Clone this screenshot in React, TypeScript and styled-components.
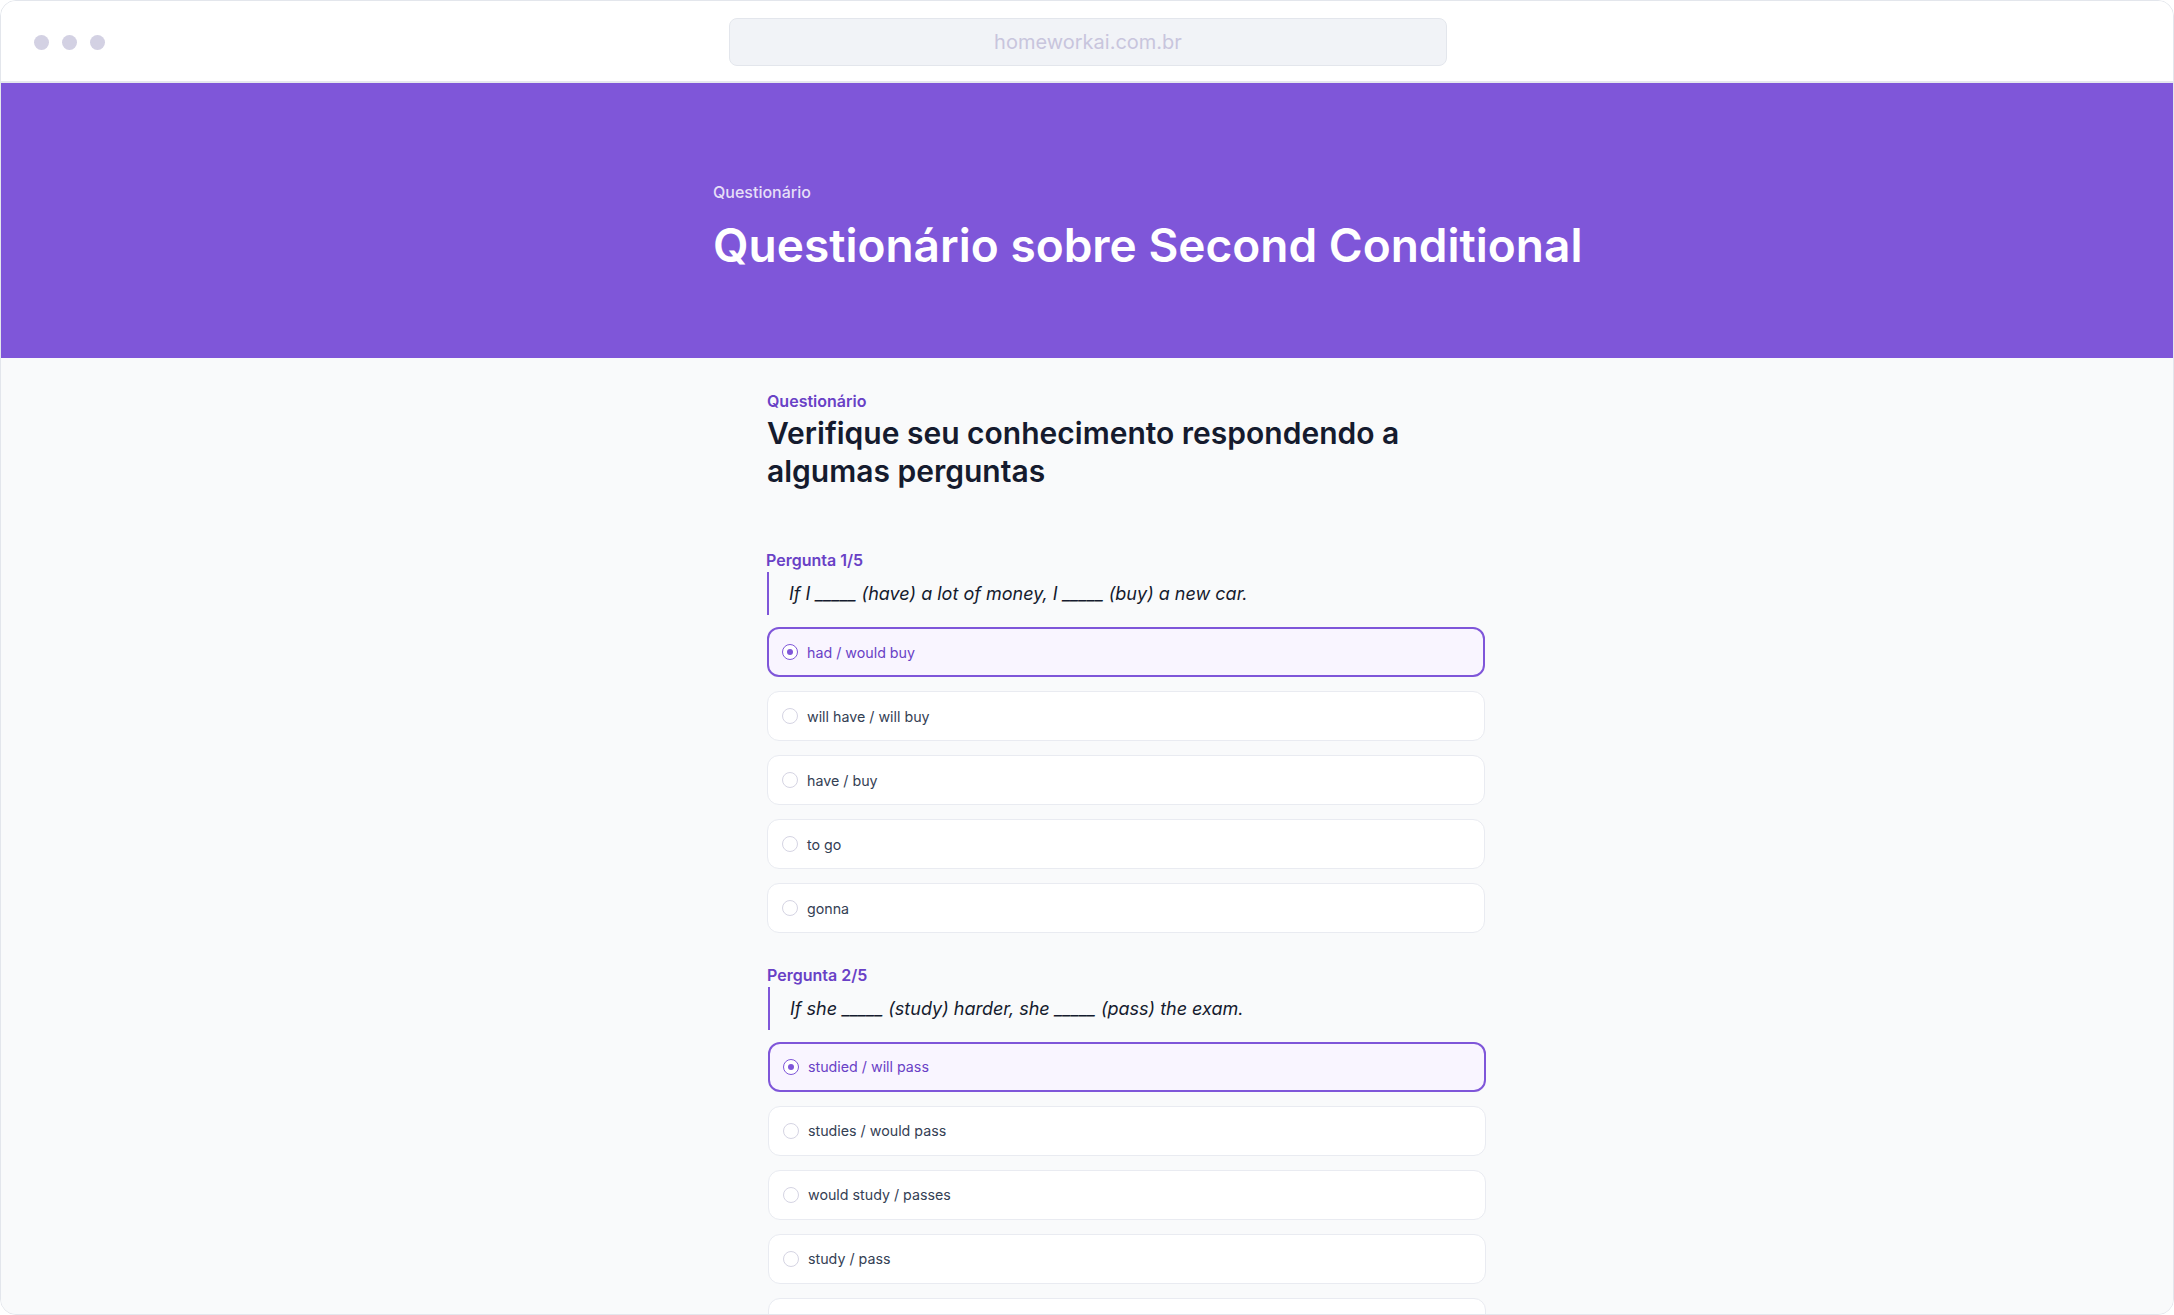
import React from "react";
import styled, { createGlobalStyle } from "styled-components";

const GlobalStyle = createGlobalStyle`
  html, body {
    margin: 0;
    padding: 0;
    background: #ffffff;
  }
  body {
    font-family: Inter, "Noto Sans", "Liberation Sans", sans-serif;
    -webkit-font-smoothing: antialiased;
  }
  * { box-sizing: border-box; }
`;

const Window = styled.div`
  height: 1315px;
  border: 1px solid #e3e6ec;
  border-radius: 16px;
  overflow: hidden;
  display: flex;
  flex-direction: column;
  background: #f9fafb;
`;

const Chrome = styled.header`
  height: 82px;
  flex: none;
  background: #ffffff;
  border-bottom: 2px solid #e6e8ee;
  display: grid;
  grid-template-columns: 1fr 720px 1fr;
  align-items: center;
`;

const Dots = styled.div`
  display: flex;
  gap: 13px;
  padding-left: 33px;
  margin-top: 2px;
`;

const Dot = styled.span`
  width: 15px;
  height: 15px;
  border-radius: 50%;
  background: #d3d1e3;
`;

const UrlBar = styled.div`
  height: 48px;
  margin-top: 2px;
  margin-left: 2px;
  border: 1px solid #e3e6ec;
  border-radius: 8px;
  background: #f1f3f7;
  display: flex;
  align-items: center;
  justify-content: center;
  font-size: 20px;
  color: #c8c5dd;
`;

const Hero = styled.section`
  height: 275px;
  flex: none;
  background: #7f56d9;
  padding: 97px 0 0 712px;
`;

const HeroEyebrow = styled.div`
  font-size: 16px;
  line-height: 24px;
  font-weight: 500;
  color: rgba(255, 255, 255, 0.82);
`;

const HeroTitle = styled.h1`
  margin: 15px 0 0;
  font-size: 46px;
  line-height: 53px;
  font-weight: 600;
  color: #ffffff;
  white-space: nowrap;
`;

const Main = styled.main`
  flex: 1;
  background: #f9fafb;
  padding: 31px 0 0 766px;
`;

const Column = styled.div`
  width: 720px;
`;

const Eyebrow = styled.div`
  font-size: 16px;
  line-height: 24px;
  font-weight: 600;
  color: #6941c6;
`;

const Heading = styled.h2`
  margin: 2px 0 0;
  width: 718px;
  font-size: 30px;
  line-height: 37.5px;
  font-weight: 600;
  color: #151b2e;
`;

const QuestionList = styled.div`
  margin-top: 58px;
  display: flex;
  flex-direction: column;
  gap: 29.5px;
`;

const QuestionBlock = styled.div<{ $shift: number }>`
  margin-left: ${(p) => p.$shift}px;
  display: flex;
  flex-direction: column;
`;

const QuestionLabel = styled.div`
  font-size: 16px;
  line-height: 24px;
  font-weight: 600;
  color: #6941c6;
  margin-left: -1px;
`;

const Prompt = styled.blockquote`
  margin: 0;
  border-left: 2px solid #7f56d9;
  padding: 8px 0 8px 20px;
  font-size: 18px;
  line-height: 27px;
  font-style: italic;
  color: #151b2e;
`;

const Options = styled.div`
  margin-top: 12px;
  display: flex;
  flex-direction: column;
  gap: 14px;
`;

const Option = styled.div<{ $selected?: boolean }>`
  height: 50px;
  width: 718px;
  border-radius: 12px;
  border: ${(p) => (p.$selected ? "2px solid #7f56d9" : "1px solid #e9ebf1")};
  background: ${(p) => (p.$selected ? "#f9f5ff" : "#ffffff")};
  display: flex;
  align-items: center;
  gap: 9px;
  padding-left: ${(p) => (p.$selected ? 13 : 14)}px;
  font-size: 14.25px;
  color: ${(p) => (p.$selected ? "#6941c6" : "#344054")};
  font-weight: 400;
`;

const Radio = styled.span<{ $selected?: boolean }>`
  width: 16px;
  height: 16px;
  flex: none;
  border-radius: 50%;
  border: ${(p) => (p.$selected ? "1.5px solid #7f56d9" : "1px solid #d5d4e3")};
  background: #ffffff;
  display: flex;
  align-items: center;
  justify-content: center;
  &::after {
    content: "";
    width: 6px;
    height: 6px;
    border-radius: 50%;
    background: #7f56d9;
    display: ${(p) => (p.$selected ? "block" : "none")};
  }
`;

type Q = { label: string; prompt: string; options: string[]; selected: number; shift: number };

const questions: Q[] = [
  {
    label: "Pergunta 1/5",
    prompt: "If I _____ (have) a lot of money, I _____ (buy) a new car.",
    options: ["had / would buy", "will have / will buy", "have / buy", "to go", "gonna"],
    selected: 0,
    shift: 0,
  },
  {
    label: "Pergunta 2/5",
    prompt: "If she _____ (study) harder, she _____ (pass) the exam.",
    options: ["studied / will pass", "studies / would pass", "would study / passes", "study / pass", ""],
    selected: 0,
    shift: 1,
  },
];

export default function App() {
  return (
    <>
      <GlobalStyle />
      <Window>
        <Chrome>
          <Dots>
            <Dot />
            <Dot />
            <Dot />
          </Dots>
          <UrlBar>homeworkai.com.br</UrlBar>
          <div />
        </Chrome>
        <Hero>
          <HeroEyebrow>Questionário</HeroEyebrow>
          <HeroTitle>Questionário sobre Second Conditional</HeroTitle>
        </Hero>
        <Main>
          <Column>
            <Eyebrow>Questionário</Eyebrow>
            <Heading>Verifique seu conhecimento respondendo a algumas perguntas</Heading>
            <QuestionList>
              {questions.map((q) => (
                <QuestionBlock key={q.label} $shift={q.shift}>
                  <QuestionLabel>{q.label}</QuestionLabel>
                  <Prompt>{q.prompt}</Prompt>
                  <Options>
                    {q.options.map((o, i) => (
                      <Option key={`${q.label}-${i}`} $selected={i === q.selected}>
                        <Radio $selected={i === q.selected} />
                        {o}
                      </Option>
                    ))}
                  </Options>
                </QuestionBlock>
              ))}
            </QuestionList>
          </Column>
        </Main>
      </Window>
    </>
  );
}
